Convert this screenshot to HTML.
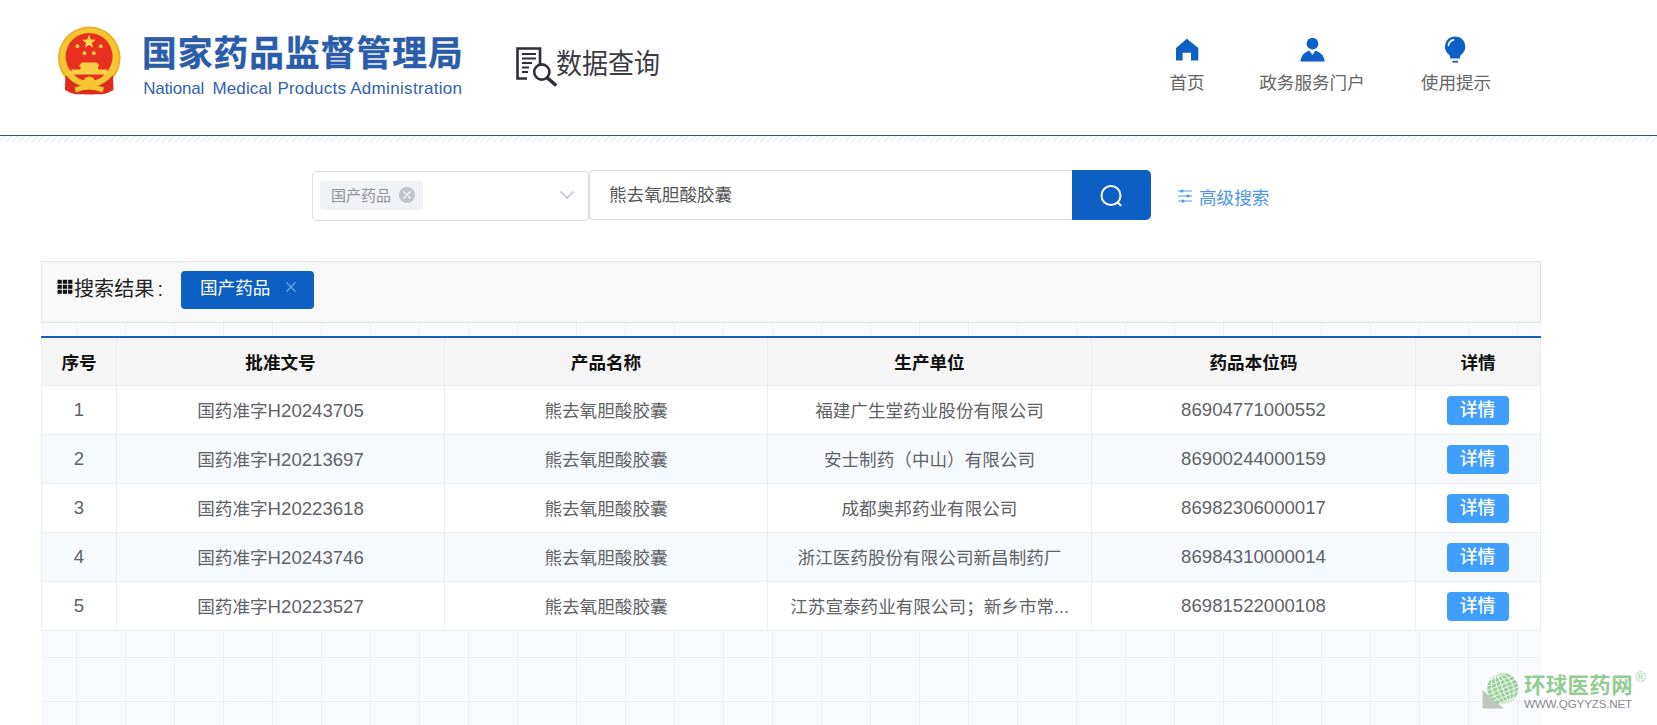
<!DOCTYPE html>
<html lang="zh-CN">
<head>
<meta charset="utf-8">
<title>国家药品监督管理局 数据查询</title>
<style>
*{box-sizing:border-box;margin:0;padding:0}
html,body{width:1657px;height:725px;overflow:hidden;background:#fff}
body{position:relative;font-family:"Liberation Sans","Noto Sans CJK SC",sans-serif;color:#606266;-webkit-font-smoothing:antialiased}
.abs{position:absolute}
.nowrap{white-space:nowrap}

/* header */
#emblem{left:57px;top:25px;width:65px;height:71px}
#title{left:142px;top:29px;font-size:34.7px;line-height:50px;font-weight:700;color:#2b5caa;-webkit-text-stroke:.4px #2b5caa;letter-spacing:1.05px;white-space:nowrap}
#subtitle{left:143.2px;top:78.5px;width:330px;height:20px;font-size:17px;line-height:20px;color:#2f62b0;white-space:nowrap}
#subtitle span{position:absolute;left:0;top:0}
#dq-icon{left:514px;top:45px;width:46px;height:42px}
#dq-text{left:555.700px;top:44px;font-size:28.5px;line-height:40px;color:#3c3c44;white-space:nowrap;transform-origin:0 50%;transform:scaleX(.913)}
.nav-txt{font-size:17.6px;line-height:22px;color:#666;white-space:nowrap;text-align:center}
#hline{left:0;top:135px;width:1657px;height:1px;background:#2a578b}
#hatch{left:0;top:136px;width:1657px;height:6px;background:repeating-linear-gradient(135deg,#fff 0,#fff 2.7px,#f1f2f6 2.7px,#f1f2f6 4.6px)}

/* search */
#select{left:312px;top:171px;width:277px;height:50px;border:1px solid #dcdde3;border-radius:4px;background:#fff}
#seltag{left:320px;top:181px;width:103px;height:29px;border-radius:4px;background:#f0f2f5}
#seltag span{position:absolute;left:11px;top:0;font-size:15px;line-height:29px;color:#909399;white-space:nowrap}
#input{left:589px;top:170px;width:484px;height:50px;border:1px solid #dcdde3;border-right:none;border-radius:4px 0 0 4px;background:#fff}
#input span{position:absolute;left:19px;top:0;font-size:17.6px;line-height:49px;color:#555;white-space:nowrap}
#sbtn{left:1072px;top:170px;width:79px;height:50px;background:#0d5fc3;border-radius:0 5px 5px 0}
#adv{left:1199px;top:185.500px;font-size:17.6px;line-height:24px;color:#4f96e3;white-space:nowrap}

/* grid bg */
#gridbg{left:41px;top:323px;width:1500px;height:402px}

/* result bar */
#rbar{left:41px;top:261px;width:1500px;height:62px;background:#f8f8f8;border:1px solid #e3e3e3}
#rlabel{left:74px;top:274.500px;font-size:20.1px;line-height:28px;color:#222;white-space:nowrap}
#rtag{left:181px;top:271px;width:133px;height:38px;background:#0d5fc3;border-radius:4px}
#rtag span{position:absolute;left:19px;top:-1px;font-size:17.6px;line-height:36px;color:#fff;white-space:nowrap}

/* table */
#tline{left:41px;top:336px;width:1500px;height:2px;background:#1560bd}
table{position:absolute;left:41px;top:338px;width:1500px;border-collapse:separate;border-spacing:0;table-layout:fixed;background:#fff}
th,td{height:49px;text-align:center;vertical-align:middle;font-size:17.6px;white-space:nowrap;overflow:hidden;border-right:1px solid #ebeef5;border-bottom:1px solid #ebeef5;padding:0 0 2px}
th{height:48px;padding-bottom:1px;background:#f5f5f5;color:#111;font-weight:700}
td{color:#606266}
tr td:first-child,tr th:first-child{border-left:1px solid #ebeef5}
tr.alt td{background:#f7fafd}
.n{font-size:18.6px;line-height:1}
.n.d{position:relative;top:1.5px}
.btn{display:inline-block;width:62px;height:29px;line-height:28px;background:#409eff;color:#fff;border-radius:4px;font-size:17.8px;font-weight:500;vertical-align:middle;position:relative;top:1px;left:-.5px}

/* watermark */
#wm-text{left:1524px;top:672px;font-size:21.4px;line-height:28px;font-weight:700;color:#93cc93;white-space:nowrap;letter-spacing:.4px}
#wm-url{left:1524px;top:696.5px;font-size:11.7px;line-height:14px;color:#8a8a8e;white-space:nowrap;letter-spacing:-.22px}
#wm-r{left:1635.300px;top:670px;font-size:14.5px;line-height:14px;color:#a5d3a5}
</style>
</head>
<body>

<!-- ===== header ===== -->
<svg id="emblem" class="abs" viewBox="0 0 65 71">
  <defs><radialGradient id="rg" cx="50%" cy="50%" r="50%"><stop offset="0" stop-color="#f7cf3c"/><stop offset=".8" stop-color="#f6c934"/><stop offset="1" stop-color="#e9ab22"/></radialGradient></defs>
  <circle cx="32.300" cy="32.900" r="31.300" fill="url(#rg)"/>
  <path d="M8.400 50.700 L7.900 65 Q13 68 18.400 69.300 H46 Q51.500 68 56.500 65 L56 50.700 Z" fill="#dd2c1e"/>
  <circle cx="32.300" cy="32.600" r="26.300" fill="none" stroke="#f5c631" stroke-width="6"/>
  <circle cx="32.100" cy="31.400" r="23.500" fill="#e9301f"/>
  <path d="M12 49.400 V46.300 H14.500 V44.600 H23.500 V41 H41 V44.600 H50 V46.300 H52.500 V49.400 Z" fill="#f7d046"/>
  <path d="M21.800 41.200 L24.500 37.600 H40 L42.700 41.200 Z" fill="#f7d046"/>
  <path d="M32 9.800 l1.800 4.700 5 .3-3.900 3.100 1.300 4.800-4.200-2.700-4.200 2.700 1.300-4.800-3.900-3.100 5-.3z" fill="#f9d94c"/>
  <circle cx="20.400" cy="21.200" r="1.900" fill="#f8d548"/><circle cx="43.800" cy="21.200" r="1.900" fill="#f8d548"/>
  <circle cx="27.400" cy="28.200" r="1.900" fill="#f8d548"/><circle cx="36.800" cy="28.200" r="1.900" fill="#f8d548"/>
  <path d="M26.500 57.500 Q27 51.500 32.200 51.500 Q37.500 51.500 38 57.500 Q32.200 61 26.500 57.500Z" fill="#f5c631"/>
  <path d="M17.500 62.500 Q32.200 56.500 47 62.500 L45.500 67.500 Q32.200 61.500 19 67.500 Z" fill="#f5c631"/>
  <path d="M27 69.300 Q32.200 64.500 37.500 69.300 Z" fill="#dd2c1e"/>
</svg>
<div id="title" class="abs">国家药品监督管理局</div>
<div id="subtitle" class="abs"><span style="letter-spacing:-.19px">National</span> <span style="left:69.3px;letter-spacing:.13px">Medical</span> <span style="left:134.2px;letter-spacing:.21px">Products</span> <span style="left:207px;letter-spacing:.32px">Administration</span></div>

<svg id="dq-icon" class="abs" viewBox="0 0 46 42" fill="none" stroke="#2e2e3a">
  <path d="M13 33.500 H3.500 V3.500 H26 V20" stroke-width="2.600"/>
  <path d="M8 9 H22 M8 13.500 H22 M8 18 H18 M8 22.500 H15 M8 27 H14" stroke-width="2"/>
  <circle cx="27.800" cy="27" r="7.600" stroke-width="2.600" fill="#fff"/>
  <path d="M33.500 33 L41 39.500" stroke-width="3.600" stroke-linecap="round"/>
</svg>
<div id="dq-text" class="abs">数据查询</div>

<!-- nav -->
<svg class="abs" style="left:1175px;top:38px;width:24px;height:23px" viewBox="0 0 24 23">
  <path d="M1 10 L11.800 0.800 L23.300 10 V22.600 H16 V14.800 H7.600 V22.600 H1 Z" fill="#0d60c6"/>
</svg>
<div class="abs nav-txt" style="left:1147px;top:72px;width:80px">首页</div>

<svg class="abs" style="left:1299px;top:36px;width:27px;height:27px" viewBox="0 0 27 27">
  <circle cx="13.500" cy="7.700" r="5.900" fill="#0d60c6"/>
  <path d="M1.300 25.600 Q2.500 17 10.300 14.500 L13.400 19 L16.500 14.500 Q24.500 17 25.800 25.600 Z" fill="#0d60c6"/>
</svg>
<div class="abs nav-txt" style="left:1252px;top:72px;width:120px">政务服务门户</div>

<svg class="abs" style="left:1443px;top:35.400px;width:24px;height:29px" viewBox="0 0 24 29">
  <path d="M12.100 1.400 A10.100 10.100 0 0 0 6.500 19.900 Q7.300 21.500 7.300 23.600 H16.900 Q16.900 21.500 17.700 19.900 A10.100 10.100 0 0 0 12.100 1.400Z" fill="#0d60c6"/>
  <rect x="9.400" y="25.800" width="5.500" height="1.800" fill="#0d60c6"/>
  <path d="M5.500 10.500 A6.500 6.500 0 0 1 10.500 4.800" stroke="#fff" stroke-width="1.700" fill="none" stroke-linecap="round"/>
</svg>
<div class="abs nav-txt" style="left:1406px;top:72px;width:100px">使用提示</div>

<div id="hline" class="abs"></div>
<div id="hatch" class="abs"></div>

<!-- ===== search ===== -->
<div id="select" class="abs"></div>
<div id="seltag" class="abs"><span>国产药品</span>
  <svg class="abs" style="left:78px;top:5px;width:18px;height:18px" viewBox="0 0 18 18">
    <circle cx="9" cy="9" r="8" fill="#c0c4cc"/>
    <path d="M5.800 5.800 L12.200 12.200 M12.200 5.800 L5.800 12.200" stroke="#fff" stroke-width="1.250" stroke-linecap="round"/>
  </svg>
</div>
<svg class="abs" style="left:559px;top:189px;width:16px;height:12px" viewBox="0 0 16 12">
  <path d="M1.500 2.500 L8 9 L14.500 2.500" stroke="#c0c4cc" stroke-width="1.600" fill="none"/>
</svg>
<div id="input" class="abs"><span>熊去氧胆酸胶囊</span></div>
<div id="sbtn" class="abs">
  <svg class="abs" style="left:26px;top:12px;width:28px;height:28px" viewBox="0 0 28 28">
    <circle cx="13" cy="13.500" r="9.500" stroke="#fff" stroke-width="2" fill="none"/>
    <path d="M19.800 20.500 L22.500 23.200" stroke="#fff" stroke-width="2.200" stroke-linecap="round"/>
  </svg>
</div>
<svg class="abs" style="left:1177px;top:188px;width:16px;height:16px" viewBox="0 0 16 16">
  <path d="M1 3 H15 M1 8 H15 M1 13 H15" stroke="#5a9de6" stroke-width="1.100"/>
  <circle cx="5" cy="3" r="1.600" fill="#4f96e3"/><circle cx="11" cy="8" r="1.600" fill="#4f96e3"/><circle cx="6" cy="13" r="1.600" fill="#4f96e3"/>
</svg>
<div id="adv" class="abs">高级搜索</div>

<!-- ===== results ===== -->
<svg id="gridbg" class="abs" viewBox="0 0 1500 402"><defs><pattern id="gp" width="500" height="44" patternUnits="userSpaceOnUse"><g stroke="#eff1f6" stroke-width="1" fill="none"><path d="M35.5 0V44"/><path d="M84.5 0V44"/><path d="M133.5 0V44"/><path d="M182.5 0V44"/><path d="M231.5 0V44"/><path d="M280.5 0V44"/><path d="M329.5 0V44"/><path d="M378.5 0V44"/><path d="M427.5 0V44"/><path d="M476.5 0V44"/><path d="M0 26.500H500"/></g><g fill="#e9ebf1"><circle cx="35.5" cy="26.500" r="1.100"/><circle cx="84.5" cy="26.500" r="1.100"/><circle cx="133.5" cy="26.500" r="1.100"/><circle cx="182.5" cy="26.500" r="1.100"/><circle cx="231.5" cy="26.500" r="1.100"/><circle cx="280.5" cy="26.500" r="1.100"/><circle cx="329.5" cy="26.500" r="1.100"/><circle cx="378.5" cy="26.500" r="1.100"/><circle cx="427.5" cy="26.500" r="1.100"/><circle cx="476.5" cy="26.500" r="1.100"/></g></pattern></defs><rect width="1500" height="402" fill="#f9fafe"/><rect width="1500" height="402" fill="url(#gp)"/></svg>
<div id="rbar" class="abs"></div>
<svg class="abs" style="left:56.800px;top:279px;width:16px;height:16px" viewBox="0 0 16 16" fill="#111">
  <rect x="0.500" y="0.800" width="4.300" height="4"/><rect x="5.800" y="0.800" width="4.300" height="4"/><rect x="11.100" y="0.800" width="4.300" height="4"/>
  <rect x="0.500" y="5.800" width="4.300" height="4"/><rect x="5.800" y="5.800" width="4.300" height="4"/><rect x="11.100" y="5.800" width="4.300" height="4"/>
  <rect x="0.500" y="10.800" width="4.300" height="4"/><rect x="5.800" y="10.800" width="4.300" height="4"/><rect x="11.100" y="10.800" width="4.300" height="4"/>
</svg>
<div id="rlabel" class="abs">搜索结果<span style="margin-left:3px">:</span></div>
<div id="rtag" class="abs"><span>国产药品</span>
  <svg class="abs" style="left:104.300px;top:10px;width:12px;height:12px" viewBox="0 0 12 12">
    <path d="M1.500 1.500 L10.500 10.500 M10.500 1.500 L1.500 10.500" stroke="#6fa8ea" stroke-width="1.200"/>
  </svg>
</div>

<div id="tline" class="abs"></div>
<table>
  <colgroup><col style="width:76px"><col style="width:328px"><col style="width:323px"><col style="width:324px"><col style="width:324px"><col style="width:125px"></colgroup>
  <tr><th>序号</th><th>批准文号</th><th>产品名称</th><th>生产单位</th><th>药品本位码</th><th>详情</th></tr>
  <tr><td><span class="n d">1</span></td><td>国药准字<span class="n">H20243705</span></td><td>熊去氧胆酸胶囊</td><td>福建广生堂药业股份有限公司</td><td><span class="n d">86904771000552</span></td><td><span class="btn">详情</span></td></tr>
  <tr class="alt"><td><span class="n d">2</span></td><td>国药准字<span class="n">H20213697</span></td><td>熊去氧胆酸胶囊</td><td>安士制药（中山）有限公司</td><td><span class="n d">86900244000159</span></td><td><span class="btn">详情</span></td></tr>
  <tr><td><span class="n d">3</span></td><td>国药准字<span class="n">H20223618</span></td><td>熊去氧胆酸胶囊</td><td>成都奥邦药业有限公司</td><td><span class="n d">86982306000017</span></td><td><span class="btn">详情</span></td></tr>
  <tr class="alt"><td><span class="n d">4</span></td><td>国药准字<span class="n">H20243746</span></td><td>熊去氧胆酸胶囊</td><td>浙江医药股份有限公司新昌制药厂</td><td><span class="n d">86984310000014</span></td><td><span class="btn">详情</span></td></tr>
  <tr><td><span class="n d">5</span></td><td>国药准字<span class="n">H20223527</span></td><td>熊去氧胆酸胶囊</td><td>江苏宣泰药业有限公司；新乡市常...</td><td><span class="n d">86981522000108</span></td><td><span class="btn">详情</span></td></tr>
</table>

<!-- ===== watermark ===== -->
<svg class="abs" style="left:1480px;top:670px;width:42px;height:42px" viewBox="0 0 42 42">
  <path d="M2.500 20 V38.500 H24 Z" fill="#bcc8bc"/>
  <circle cx="22.800" cy="18.600" r="15.500" fill="#9bd09b"/>
  <g stroke="#f4faf4" stroke-width="0.900" fill="none" transform="rotate(-22 22.800 18.600)">
    <path d="M22.800 3.100 V34.100 M7.300 18.600 H38.300"/>
    <ellipse cx="22.800" cy="18.600" rx="5" ry="15.500"/><ellipse cx="22.800" cy="18.600" rx="10.500" ry="15.500"/>
    <path d="M9.500 10.500 H36 M9.500 26.700 H36 M14 5.800 H31.600 M14 31.400 H31.600 M8 14.500 H37.600 M8 22.700 H37.600"/>
  </g>
</svg>
<div id="wm-text" class="abs">环球医药网</div>
<div id="wm-r" class="abs">®</div>
<div id="wm-url" class="abs">WWW.QGYYZS.NET</div>

</body>
</html>
